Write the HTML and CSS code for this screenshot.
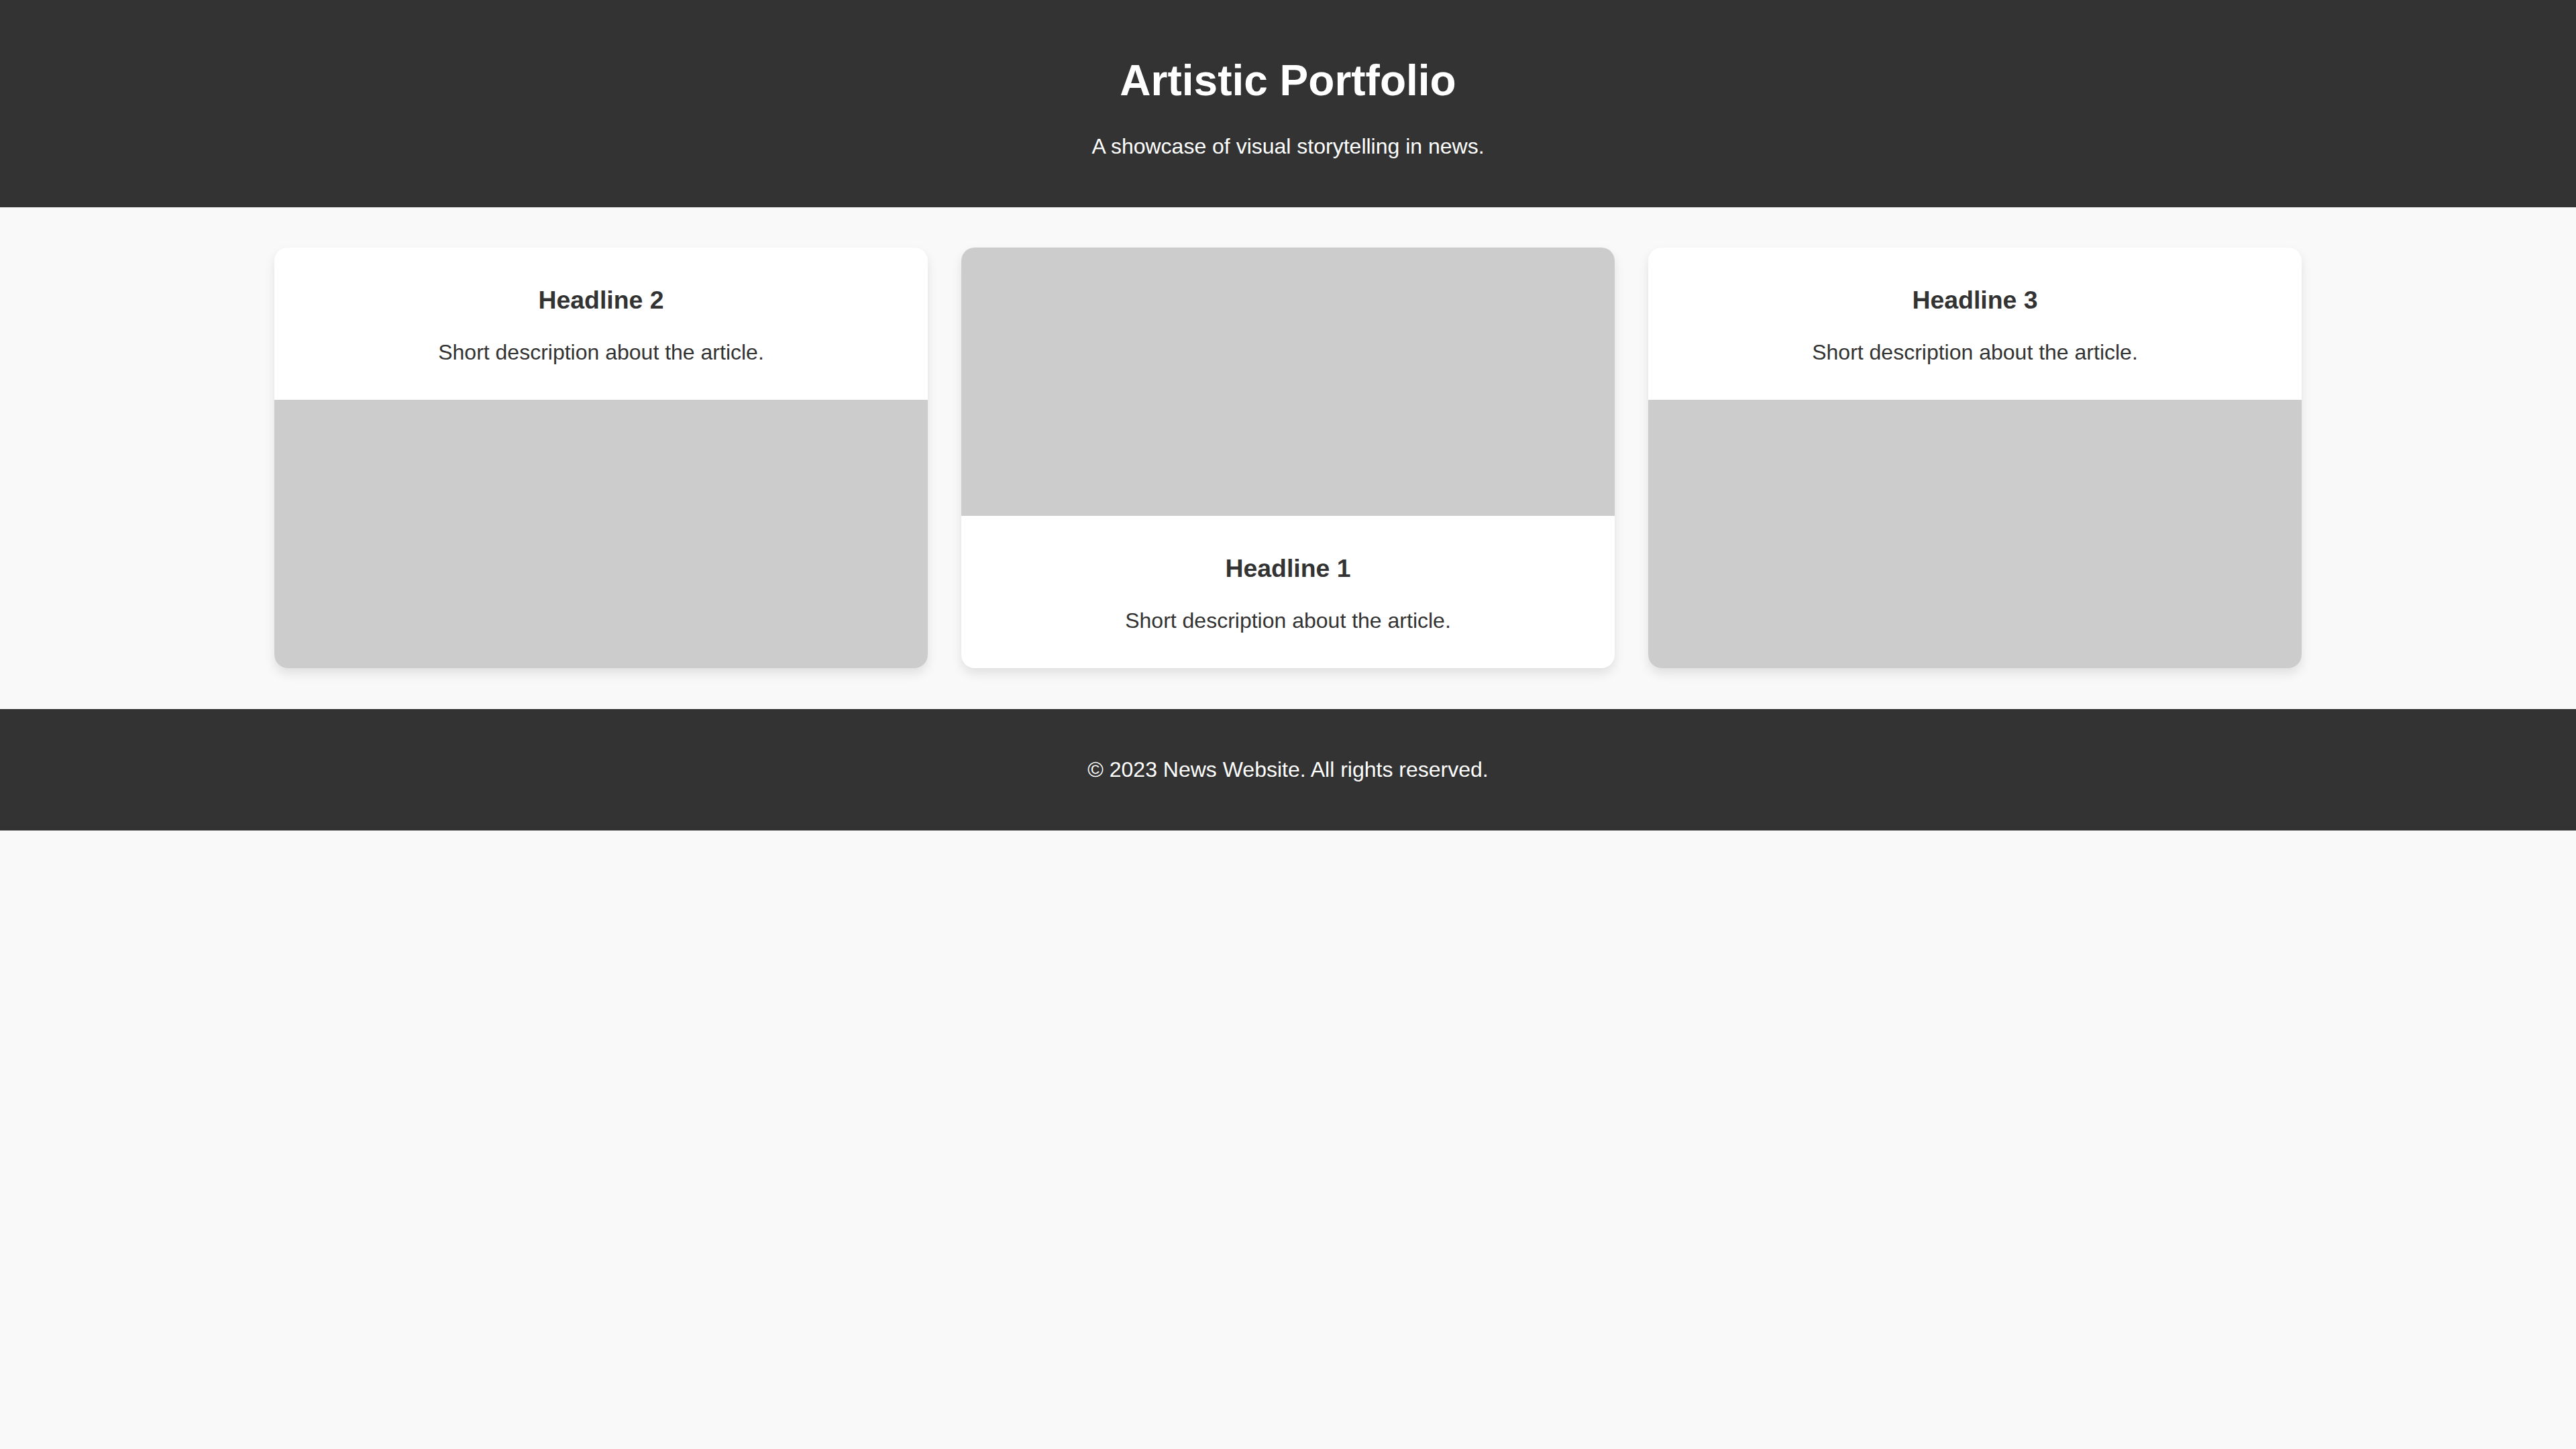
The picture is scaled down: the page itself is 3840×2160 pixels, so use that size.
FILE: index.html
```html
<!DOCTYPE html>
<html lang="en">
<head>
<meta charset="utf-8">
<title>Artistic Portfolio</title>
<link rel="stylesheet" href="styles.css">
</head>
<body>
<header class="site-header">
  <h1 class="site-title">Artistic Portfolio</h1>
  <p class="site-tagline">A showcase of visual storytelling in news.</p>
</header>
<main class="portfolio">
  <article class="card">
    <div class="card-body">
      <h3 class="card-title">Headline 2</h3>
      <p class="card-text">Short description about the article.</p>
    </div>
    <div class="card-image"></div>
  </article>
  <article class="card">
    <div class="card-image"></div>
    <div class="card-body">
      <h3 class="card-title">Headline 1</h3>
      <p class="card-text">Short description about the article.</p>
    </div>
  </article>
  <article class="card">
    <div class="card-body">
      <h3 class="card-title">Headline 3</h3>
      <p class="card-text">Short description about the article.</p>
    </div>
    <div class="card-image"></div>
  </article>
</main>
<footer class="site-footer">
  <p class="footer-text">&copy; 2023 News Website. All rights reserved.</p>
</footer>
</body>
</html>
```

FILE: styles.css
```css
html, body {
  margin: 0;
  padding: 0;
}

body {
  background: #f9f9f9;
  color: #333333;
  font-family: "Liberation Sans", Arial, Helvetica, sans-serif;
  font-size: 32px;
}

.site-header {
  background: #333333;
  color: #ffffff;
  text-align: center;
  padding: 40px;
}

.site-title {
  font-size: 64px;
  font-weight: bold;
  margin: 43px 0;
}

.site-tagline {
  margin: 0 0 32px;
}

.portfolio {
  display: grid;
  grid-template-columns: repeat(3, 974px);
  gap: 50px;
  justify-content: center;
  padding: 60px 0 61px;
}

.card {
  background: #ffffff;
  border-radius: 20px;
  box-shadow: 0 8px 16px rgba(0, 0, 0, 0.1);
  overflow: hidden;
  display: flex;
  flex-direction: column;
  text-align: center;
}

.card-body {
  padding: 20px;
}

.card-title {
  font-size: 37.44px;
  font-weight: bold;
  margin: 37.44px 0;
}

.card-text {
  margin: 32px 0;
}

.card-image {
  height: 400px;
  background: #cccccc;
}

.site-footer {
  background: #333333;
  color: #ffffff;
  text-align: center;
  padding: 40px;
}

.footer-text {
  margin: 32px 0;
}
```
